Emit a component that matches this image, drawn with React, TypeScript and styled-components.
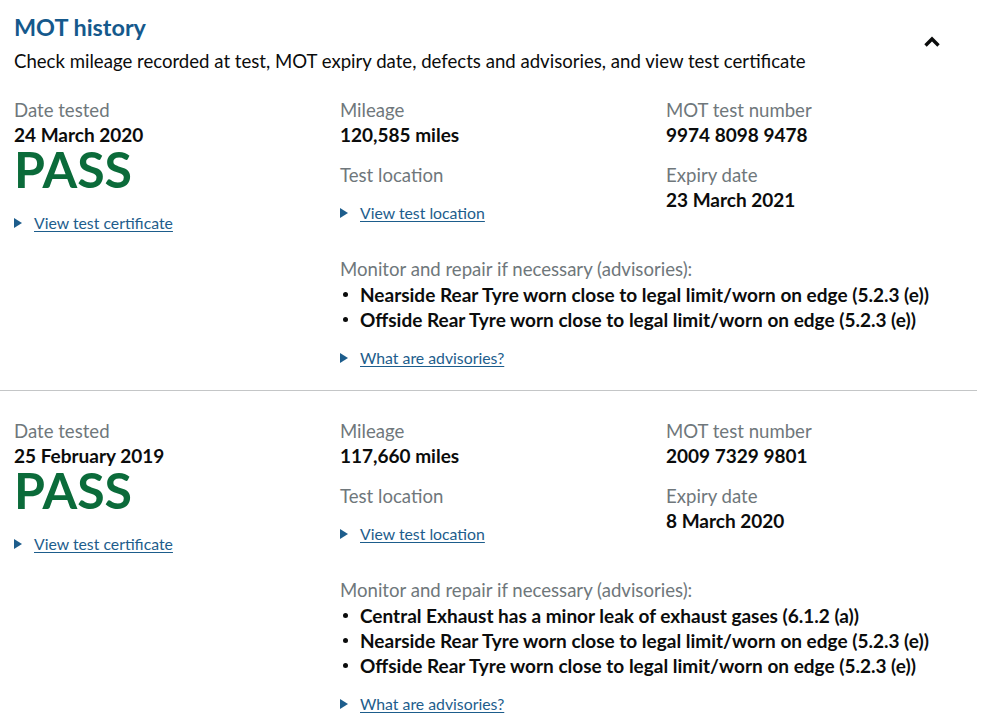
import React from 'react';
import styled, { createGlobalStyle } from 'styled-components';

const GlobalStyle = createGlobalStyle`
  body {
    margin: 0;
    background: #ffffff;
    font-family: Lato, "Noto Sans", Arial, sans-serif;
    color: #0b0c0c;
  }
`;

const colors = {
  heading: '#15598c',
  link: '#1d5d8c',
  text: '#0b0c0c',
  secondary: '#6f777b',
  pass: '#0b6b3a',
  border: '#c4c6c7',
};

const Page = styled.div`
  width: 977px;
  padding-top: 12px;
`;

const Header = styled.header`
  display: flex;
  justify-content: space-between;
  align-items: flex-start;
  padding: 0 36px 0 14px;
`;

const Title = styled.h2`
  margin: 0;
  font-size: 23.4px;
  line-height: 30px;
  font-weight: 700;
  color: ${colors.heading};
`;

const Intro = styled.p`
  margin: 7px 0 0;
  font-size: 18.6px;
  line-height: 25px;
  color: ${colors.text};
`;

const Toggle = styled.button`
  margin-top: 23px;
  padding: 0;
  border: 0;
  background: none;
  width: 18px;
  height: 12px;
  display: flex;
  cursor: pointer;
`;

interface IRecordProps {
  divided?: boolean;
}
const Record = styled.section<IRecordProps>`
  display: grid;
  grid-template-columns: 326px 326px 1fr;
  row-gap: 24px;
  padding: ${(p) => (p.divided ? '24px 0 22px 14px' : '28px 0 21px 14px')};
  border-bottom: ${(p) => (p.divided ? `1px solid ${colors.border}` : 'none')};
`;

const Column = styled.div`
  display: flex;
  flex-direction: column;
  align-items: flex-start;
`;

interface ISpacing {
  gap?: number;
}
const Label = styled.div<ISpacing>`
  margin-top: ${(p) => p.gap || 0}px;
  font-size: 18.6px;
  line-height: 25px;
  color: ${colors.secondary};
`;

const Value = styled.div`
  font-size: 19px;
  line-height: 24px;
  font-weight: 700;
  color: ${colors.text};
`;

const Result = styled.div`
  font-size: 50px;
  line-height: 44px;
  font-weight: 700;
  color: ${colors.pass};
`;

const Details = styled.div<ISpacing>`
  margin-top: ${(p) => p.gap || 0}px;
  display: flex;
  align-items: center;
  gap: 12px;
  font-size: 15.8px;
  line-height: 20px;
`;

const Marker = styled.span`
  width: 0;
  height: 0;
  border-top: 5px solid transparent;
  border-bottom: 5px solid transparent;
  border-left: 8px solid ${colors.link};
`;

const Link = styled.a`
  color: ${colors.link};
  text-decoration: underline;
  text-underline-offset: 2px;
  cursor: pointer;
`;

const Advisories = styled.div`
  grid-column: 2 / span 2;
`;

const Items = styled.ul`
  margin: 0;
  padding: 0;
  list-style: none;
`;

const Item = styled.li`
  position: relative;
  padding-left: 20px;
  font-size: 19px;
  line-height: 25px;
  font-weight: 700;
  color: ${colors.text};

  &::before {
    content: '';
    position: absolute;
    left: 3px;
    top: 10px;
    width: 5px;
    height: 5px;
    border-radius: 50%;
    background: ${colors.text};
  }
`;

interface ITest {
  date: string;
  mileage: string;
  number: string;
  expiry: string;
  advisories: string[];
}

const tests: ITest[] = [
  {
    date: '24 March 2020',
    mileage: '120,585 miles',
    number: '9974 8098 9478',
    expiry: '23 March 2021',
    advisories: [
      'Nearside Rear Tyre worn close to legal limit/worn on edge (5.2.3 (e))',
      'Offside Rear Tyre worn close to legal limit/worn on edge (5.2.3 (e))',
    ],
  },
  {
    date: '25 February 2019',
    mileage: '117,660 miles',
    number: '2009 7329 9801',
    expiry: '8 March 2020',
    advisories: [
      'Central Exhaust has a minor leak of exhaust gases (6.1.2 (a))',
      'Nearside Rear Tyre worn close to legal limit/worn on edge (5.2.3 (e))',
      'Offside Rear Tyre worn close to legal limit/worn on edge (5.2.3 (e))',
    ],
  },
];

const Chevron = () => (
  <svg width="18" height="12" viewBox="0 0 18 12" aria-hidden="true">
    <path d="M2.5 10.5 L9 4 L15.5 10.5" fill="none" stroke="#0b0c0c" strokeWidth="3.4" />
  </svg>
);

const DetailsLink = ({ text, gap }: { text: string; gap?: number }) => (
  <Details gap={gap}>
    <Marker />
    <Link>{text}</Link>
  </Details>
);

const TestRecord = ({ test, divided }: { test: ITest; divided?: boolean }) => (
  <Record divided={divided}>
    <Column>
      <Label>Date tested</Label>
      <Value>{test.date}</Value>
      <Result>PASS</Result>
      <DetailsLink text="View test certificate" gap={22} />
    </Column>
    <Column>
      <Label>Mileage</Label>
      <Value>{test.mileage}</Value>
      <Label gap={16}>Test location</Label>
      <DetailsLink text="View test location" gap={15} />
    </Column>
    <Column>
      <Label>MOT test number</Label>
      <Value>{test.number}</Value>
      <Label gap={16}>Expiry date</Label>
      <Value>{test.expiry}</Value>
    </Column>
    <Advisories>
      <Label>Monitor and repair if necessary (advisories):</Label>
      <Items>
        {test.advisories.map((a, i) => (
          <Item key={i}>{a}</Item>
        ))}
      </Items>
      <DetailsLink text="What are advisories?" gap={16} />
    </Advisories>
  </Record>
);

export default function App() {
  return (
    <Page>
      <GlobalStyle />
      <Header>
        <div>
          <Title>MOT history</Title>
          <Intro>
            Check mileage recorded at test, MOT expiry date, defects and advisories, and view test certificate
          </Intro>
        </div>
        <Toggle aria-label="Collapse MOT history">
          <Chevron />
        </Toggle>
      </Header>
      {tests.map((t, i) => (
        <TestRecord key={t.number} test={t} divided={i < tests.length - 1} />
      ))}
    </Page>
  );
}
